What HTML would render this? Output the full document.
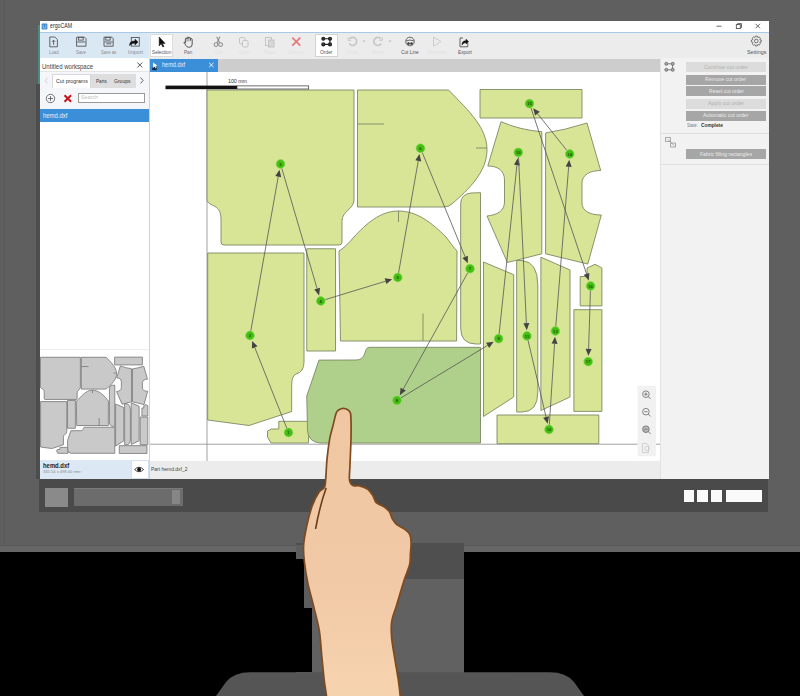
<!DOCTYPE html>
<html><head><meta charset="utf-8">
<style>
*{margin:0;padding:0;box-sizing:border-box}
html,body{width:800px;height:696px;overflow:hidden;background:#000;font-family:"Liberation Sans",sans-serif}
.a{position:absolute}
.t{position:absolute;white-space:nowrap;line-height:1}
svg{position:absolute;left:0;top:0;overflow:visible}
</style></head><body>

<div class="a" style="left:0px;top:0px;width:800px;height:552px;background:#5f5f5f;"></div>
<div class="a" style="left:4px;top:0px;width:0.8px;height:545px;background:#5a5a5a;"></div>
<div class="a" style="left:0px;top:545px;width:800px;height:1px;background:#595959;"></div>
<div class="a" style="left:0px;top:546px;width:800px;height:6px;background:#666666;"></div>
<div class="a" style="left:296px;top:543px;width:168px;height:129.5px;background:#616161;"></div>
<div class="a" style="left:296px;top:543px;width:168px;height:36px;background:#4f4f4f;"></div>
<div class="a" style="left:296px;top:545px;width:9px;height:15px;background:#5d5d5d;"></div>
<div class="a" style="left:296px;top:559.4px;width:8.4px;height:48.6px;background:#000;"></div>
<div class="a" style="left:304.4px;top:560px;width:8px;height:48px;background:#5d5d5d;"></div>
<div class="a" style="left:296px;top:608px;width:16px;height:63.5px;background:#000;"></div>
<svg width="800" height="696"><path d="M250,672.2 L550,672.2 Q566,672.2 574,682 L584,696 L216,696 L226,682 Q234,672.2 250,672.2 Z" fill="#555"/></svg>
<div class="a" style="left:39px;top:479px;width:729px;height:33px;background:#4a4a4a;"></div>
<div class="a" style="left:45px;top:488px;width:22.5px;height:18.5px;background:#8a8a8a;"></div>
<div class="a" style="left:73.5px;top:488px;width:109.5px;height:18px;background:#6c6c6c;border-top:1px solid #7a7a7a"></div>
<div class="a" style="left:172px;top:490px;width:8px;height:14px;background:#868686;"></div>
<div class="a" style="left:683.5px;top:490px;width:10.5px;height:12px;background:#fafafa;"></div>
<div class="a" style="left:697px;top:490px;width:11px;height:12px;background:#fafafa;"></div>
<div class="a" style="left:711px;top:490px;width:11px;height:12px;background:#fafafa;"></div>
<div class="a" style="left:726px;top:490px;width:36px;height:12px;background:#fafafa;"></div>
<div class="a" style="left:40px;top:21px;width:729px;height:458px;background:#ffffff;"></div>
<div class="a" style="left:37.5px;top:25px;width:2.5px;height:59px;background:#4b8b80;"></div>
<div class="a" style="left:36px;top:84px;width:4px;height:395px;background:#4d4d4d;"></div>
<div class="a" style="left:40px;top:21px;width:729px;height:11px;background:#ffffff;"></div>
<svg width="800" height="696"><rect x="41.6" y="23.6" width="5.8" height="5.8" rx="0.8" fill="#3a86cc"/><path d="M43.1,24.6 v2.6 q0,1.2 1.4,1.2 q1.4,0 1.4,-1.2 v-2.6" stroke="#d6e8f8" stroke-width="0.7" fill="none"/></svg>
<div class="t" style="left:50.00px;top:23.24px;font-size:6.8px;color:#2a2a2a;transform:scaleX(0.766);transform-origin:0 0;">ergoCAM</div>
<svg width="800" height="696" stroke="#444" stroke-width="0.8" fill="none"><path d="M716.5,26.2 h5"/><rect x="736.3" y="24.6" width="4" height="4"/><path d="M737.5,24.6 v-1 h4 v4 h-1"/><path d="M755.5,23.8 l4.5,4.5 M760,23.8 l-4.5,4.5"/></svg>
<div class="a" style="left:40px;top:32px;width:729px;height:1px;background:#a9c8e6;"></div>
<div class="a" style="left:40px;top:33px;width:108.6px;height:25.4px;background:#dae8f4;"></div>
<div class="a" style="left:148.6px;top:33px;width:620.4px;height:25.5px;background:#ececec;"></div>
<div class="a" style="left:149.5px;top:33.5px;width:23.5px;height:23.5px;background:#ffffff;border:1px solid #dcdcdc"></div>
<div class="a" style="left:315px;top:33.5px;width:23px;height:23.5px;background:#ffffff;border:1px solid #d2d2d2"></div>
<div class="t" style="left:49.00px;top:49.86px;font-size:5.6px;color:#8a8a8a;transform:scaleX(0.771);transform-origin:0 0;">Load</div>
<div class="t" style="left:76.00px;top:49.86px;font-size:5.6px;color:#8a8a8a;transform:scaleX(0.783);transform-origin:0 0;">Save</div>
<div class="t" style="left:101.20px;top:49.86px;font-size:5.6px;color:#8a8a8a;transform:scaleX(0.746);transform-origin:0 0;">Save as</div>
<div class="t" style="left:128.00px;top:49.86px;font-size:5.6px;color:#8a8a8a;transform:scaleX(0.939);transform-origin:0 0;">Import</div>
<div class="t" style="left:152.00px;top:49.86px;font-size:5.6px;color:#555;transform:scaleX(0.838);transform-origin:0 0;">Selection</div>
<div class="t" style="left:183.80px;top:49.86px;font-size:5.6px;color:#666;transform:scaleX(0.823);transform-origin:0 0;">Pan</div>
<div class="t" style="left:214.50px;top:49.86px;font-size:5.6px;color:#e2e2e2;transform:scaleX(0.861);transform-origin:0 0;">Cut</div>
<div class="t" style="left:238.50px;top:49.86px;font-size:5.6px;color:#e2e2e2;transform:scaleX(0.803);transform-origin:0 0;">Copy</div>
<div class="t" style="left:263.50px;top:49.86px;font-size:5.6px;color:#e2e2e2;transform:scaleX(0.873);transform-origin:0 0;">Paste</div>
<div class="t" style="left:288.00px;top:49.86px;font-size:5.6px;color:#e2e2e2;transform:scaleX(0.988);transform-origin:0 0;">Delete</div>
<div class="t" style="left:320.00px;top:49.86px;font-size:5.6px;color:#555;transform:scaleX(0.873);transform-origin:0 0;">Order</div>
<div class="t" style="left:346.00px;top:49.86px;font-size:5.6px;color:#e2e2e2;transform:scaleX(0.896);transform-origin:0 0;">Undo</div>
<div class="t" style="left:372.00px;top:49.86px;font-size:5.6px;color:#e2e2e2;transform:scaleX(0.896);transform-origin:0 0;">Redo</div>
<div class="t" style="left:401.00px;top:49.86px;font-size:5.6px;color:#555;transform:scaleX(0.853);transform-origin:0 0;">Cut Line</div>
<div class="t" style="left:427.00px;top:49.86px;font-size:5.6px;color:#e2e2e2;transform:scaleX(0.918);transform-origin:0 0;">Simulate</div>
<div class="t" style="left:457.50px;top:49.86px;font-size:5.6px;color:#555;transform:scaleX(0.853);transform-origin:0 0;">Export</div>
<div class="t" style="left:746.50px;top:50.06px;font-size:5.6px;color:#555;transform:scaleX(0.964);transform-origin:0 0;">Settings</div>
<svg width="800" height="696" fill="none" stroke="#555" stroke-width="0.9">
<path d="M49.8,37 h5 l2.6,2.6 v7.2 h-7.6 z"/><path d="M53.6,44.8 v-4.6 M52,41.8 l1.6,-1.6 l1.6,1.6"/>
<path d="M76.6,37.2 h8 l1.4,1.4 v7.6 h-9.4 z"/><rect x="78.6" y="37.3" width="4.6" height="2.8"/><path d="M77.2,42 h8.2"/>
<path d="M104,37.2 h8 l1.2,1.2 v7.8 h-9.2 z"/><rect x="105.8" y="37.3" width="4.4" height="2.8"/><path d="M104.6,42 h8.2 M106.3,43.8 h5"/>
<rect x="131.3" y="37.5" width="8" height="8.6"/>
<path d="M129.6,45.5 q0,-4.6 5.4,-4.4 l0,-1.8 l3,2.8 l-3,2.8 l0,-1.8 q-3.4,0 -5.4,2.4z" fill="#111" stroke="#111" stroke-width="0.6"/>
<path d="M159.2,37 v9 l2,-2.2 l1.6,3.2 l1.2,-0.6 l-1.6,-3 h2.8 z" fill="#111" stroke="#111" stroke-width="0.5"/>
<path d="M184.3,42.6 l1.6,2.9 q1,1.8 3,1.8 h0.5 q2.8,0 2.8,-3.2 v-4.6 q0,-0.8 -0.85,-0.8 q-0.85,0 -0.85,0.8 v-1.2 q0,-0.8 -0.85,-0.8 q-0.85,0 -0.85,0.8 v-0.4 q0,-0.8 -0.85,-0.8 q-0.85,0 -0.85,0.8 v1 q0,-0.8 -0.85,-0.8 q-0.85,0 -0.85,0.8 v3.8 q-1.2,-1 -1.6,0 z" stroke-width="0.9" stroke="#444"/><path d="M187.1,38.7 v3 M188.8,37.6 v3.6 M190.5,38.2 v3" stroke="#444" stroke-width="0.6"/>
</svg>
<svg width="800" height="696" fill="none" stroke="#8f8f8f" stroke-width="1.1">
<circle cx="216" cy="44.6" r="1.9"/><circle cx="220.6" cy="44.6" r="1.9"/><path d="M216.9,42.9 l3,-6.2 M219.7,42.9 l-3,-6.2"/>
</svg>
<svg width="800" height="696" fill="none" stroke="#c0c0c0" stroke-width="0.9">
<rect x="239.5" y="37.5" width="5.5" height="6.5" rx="1.2"/><rect x="242.5" y="40.5" width="5.5" height="6.5" rx="1.2" fill="#ececec"/>
<rect x="265.5" y="37.5" width="6" height="8"/><rect x="268.5" y="40" width="5.5" height="7" fill="#d6d6d6"/>
</svg>
<svg width="800" height="696" fill="none" stroke="#e8797d" stroke-width="1.8">
<path d="M292.3,37.6 l8,8 M300.3,37.6 l-8,8"/>
</svg>
<svg width="800" height="696" fill="#fff" stroke="#222" stroke-width="1.1">
<path d="M323.5,38.8 h6.4 M323.5,44.4 h6.4 M329.9,38.8 v5.6" fill="none"/>
<circle cx="323.3" cy="38.8" r="1.5" fill="#333"/><circle cx="330" cy="38.8" r="1.5" fill="#333"/><circle cx="323.3" cy="44.4" r="1.5" fill="#333"/><circle cx="330" cy="44.4" r="1.5" fill="#333"/>
</svg>
<svg width="800" height="696" fill="none" stroke="#c8c8c8" stroke-width="1.8">
<path d="M349.5,39 a4,4 0 1 1 -0.3,4.4"/><path d="M348.2,37.3 v3 h3" stroke-width="1"/>
<path d="M381,39 a4,4 0 1 0 0.3,4.4"/><path d="M382.3,37.3 v3 h-3" stroke-width="1"/>
</svg>
<svg width="800" height="696" fill="#bdbdbd" stroke="none">
<path d="M362.5,40.6 h3 l-1.5,1.6z M388.5,40.6 h3 l-1.5,1.6z"/>
</svg>
<svg width="800" height="696" fill="none" stroke="#555" stroke-width="0.9">
<circle cx="410" cy="41.5" r="4.3"/><path d="M406,41 q4,-2 8,0 M407,44.2 q3,-1.5 6,0"/><circle cx="408.5" cy="43.6" r="1" fill="#333"/><circle cx="411.5" cy="43.6" r="1" fill="#333"/>
</svg>
<svg width="800" height="696" fill="none" stroke="#c8c8c8" stroke-width="0.9">
<path d="M433.5,37 l7.5,4.6 l-7.5,4.6z"/>
</svg>
<svg width="800" height="696" fill="none" stroke="#555" stroke-width="0.9">
<path d="M460,38 h3 M467.8,42.5 v4.3 h-7.8 v-8.8"/>
<path d="M462,45 q0,-4.4 4,-4.2 v-1.6 l2.6,2.4 l-2.6,2.4 v-1.6 q-2.6,0 -4,2.6z" fill="#111" stroke="#111" stroke-width="0.5"/>
</svg>
<svg width="800" height="696" fill="none" stroke="#555" stroke-width="0.8">
<circle cx="756.3" cy="41" r="1.8"/>
<path d="M760.03,39.87 L761.21,40.06 L761.21,41.94 L760.03,42.13 L759.74,42.84 L760.44,43.80 L759.10,45.14 L758.14,44.44 L757.43,44.73 L757.24,45.91 L755.36,45.91 L755.17,44.73 L754.46,44.44 L753.50,45.14 L752.16,43.80 L752.86,42.84 L752.57,42.13 L751.39,41.94 L751.39,40.06 L752.57,39.87 L752.86,39.16 L752.16,38.20 L753.50,36.86 L754.46,37.56 L755.17,37.27 L755.36,36.09 L757.24,36.09 L757.43,37.27 L758.14,37.56 L759.10,36.86 L760.44,38.20 L759.74,39.16Z"/>
</svg>

<div class="a" style="left:40px;top:58.4px;width:108.6px;height:420.6px;background:#ffffff;"></div>
<div class="a" style="left:40px;top:71.4px;width:108.6px;height:37.6px;background:#f4f6f9;"></div>
<div class="a" style="left:40px;top:71.4px;width:108.6px;height:0.6px;background:#e4e4e4;"></div>
<div class="t" style="left:42.10px;top:62.87px;font-size:7px;color:#444;transform:scaleX(0.864);transform-origin:0 0;">Untitled workspace</div>
<svg width="800" height="696" stroke="#444" stroke-width="0.9"><path d="M137.3,62.5 l5,5 M142.3,62.5 l-5,5"/></svg>
<div class="a" style="left:91.3px;top:74.4px;width:45px;height:13.4px;background:#dedede;"></div>
<div class="a" style="left:52.2px;top:74.4px;width:39.1px;height:14px;background:#ffffff;border:1px solid #d8d8d8;border-bottom:none"></div>
<div class="t" style="left:56.10px;top:77.75px;font-size:6.2px;color:#333;transform:scaleX(0.849);transform-origin:0 0;">Cut programs</div>
<div class="t" style="left:95.80px;top:77.75px;font-size:6.2px;color:#333;transform:scaleX(0.753);transform-origin:0 0;">Parts</div>
<div class="t" style="left:114.30px;top:77.75px;font-size:6.2px;color:#333;transform:scaleX(0.816);transform-origin:0 0;">Groups</div>
<svg width="800" height="696" fill="none" stroke-width="0.8"><path d="M47.5,77.8 l-2.2,2.8 l2.2,2.8" stroke="#c4c4c4"/><path d="M140.5,77.5 l2.6,3 l-2.6,3" stroke="#444"/></svg>
<svg width="800" height="696" fill="none" stroke="#555" stroke-width="0.8"><circle cx="50.5" cy="98.5" r="4.2"/><path d="M48,98.5 h5 M50.5,96 v5"/></svg>
<svg width="800" height="696" fill="none" stroke="#c8171e" stroke-width="2"><path d="M64.5,95.2 l6.6,6.6 M71.1,95.2 l-6.6,6.6"/></svg>
<div class="a" style="left:78.3px;top:93.4px;width:66.5px;height:10px;background:#ffffff;border:1px solid #9a9a9a"></div>
<div class="t" style="left:81.00px;top:95.34px;font-size:5.5px;color:#c0c0c0;transform:scaleX(0.975);transform-origin:0 0;">Search</div>
<div class="a" style="left:40px;top:109px;width:108.6px;height:12.5px;background:#3b8ed8;"></div>
<div class="t" style="left:43.10px;top:112.50px;font-size:6.5px;color:#e8f1fb;transform:scaleX(0.916);transform-origin:0 0;">hemd.dxf</div>
<div class="a" style="left:40px;top:349.3px;width:108.6px;height:0.8px;background:#eeeeee;"></div>
<div class="a" style="left:40px;top:460.2px;width:91px;height:18.8px;background:#dce9f5;"></div>
<div class="a" style="left:131px;top:460.2px;width:17.6px;height:18.8px;background:#ffffff;border:1px solid #cfe1f2"></div>
<div class="t" style="left:43.00px;top:463.34px;font-size:6.8px;color:#222;font-weight:bold;transform:scaleX(0.867);transform-origin:0 0;">hemd.dxf</div>
<div class="t" style="left:43.00px;top:470.65px;font-size:3.6px;color:#8a8a8a;transform:scaleX(1.137);transform-origin:0 0;">335.54 x 498.00 mm&#178;</div>
<svg width="800" height="696"><path d="M134.6,469.5 q4.5,-4.5 9,0 q-4.5,4.5 -9,0z" fill="#fff" stroke="#111" stroke-width="0.8"/><circle cx="139.1" cy="469.5" r="1.9" fill="#111"/></svg>
<div class="a" style="left:148.6px;top:58.4px;width:1px;height:420.6px;background:#bcd6ee;"></div>
<div class="a" style="left:149.6px;top:58.5px;width:510.6px;height:13.5px;background:#cdcdcd;"></div>
<div class="a" style="left:149.6px;top:58.5px;width:68.4px;height:13.5px;background:#3b8ed8;"></div>
<svg width="800" height="696"><path d="M152,70 q0,-3 2.5,-4 l2.5,1 q1,2 -1,3.2z" fill="#15233a"/><path d="M153,62.5 l4.5,3.2 l-2,0.3 l1.2,2 l-0.9,0.5 l-1.2,-2 l-1.4,1.4z" fill="#fff"/></svg>
<div class="t" style="left:162.00px;top:62.00px;font-size:6.5px;color:#e6f0fa;transform:scaleX(0.860);transform-origin:0 0;">hemd.dxf</div>
<svg width="800" height="696" stroke="#fff" stroke-width="0.9"><path d="M209.2,62.8 l4.3,4.3 M213.5,62.8 l-4.3,4.3"/></svg>
<div class="a" style="left:149.6px;top:72px;width:510.6px;height:389.2px;background:#ffffff;"></div>
<div class="a" style="left:149.6px;top:461.2px;width:510.6px;height:17.8px;background:#ececec;"></div>
<div class="t" style="left:151.00px;top:466.56px;font-size:5.6px;color:#444;transform:scaleX(0.888);transform-origin:0 0;">Part hemd.dxf_2</div>
<div class="a" style="left:660.2px;top:58px;width:108.8px;height:421px;background:#f2f2f2;border-left:1px solid #e2e2e2"></div>
<svg width="800" height="696" fill="none" stroke="#666" stroke-width="0.8">
<path d="M666.5,63.8 h6 M666.5,69.8 h6 M672.5,63.8 v6"/>
<circle cx="666.3" cy="63.8" r="1.5" fill="#aaa"/><circle cx="672.7" cy="63.8" r="1.5" fill="#aaa"/><circle cx="666.3" cy="69.8" r="1.5" fill="#aaa"/><circle cx="672.7" cy="69.8" r="1.5" fill="#aaa"/>
</svg>
<div class="a" style="left:686.2px;top:62px;width:79.8px;height:10.400000000000006px;background:#dcdcdc;"></div>
<div class="t" style="left:704.20px;top:64.66px;font-size:5.6px;color:#b0b0b0;transform:scaleX(0.951);transform-origin:0 0;">Continue cut order</div>
<div class="a" style="left:686.2px;top:74.6px;width:79.8px;height:10.200000000000003px;background:#a6a6a6;"></div>
<div class="t" style="left:705.30px;top:77.26px;font-size:5.6px;color:#e8e8e8;transform:scaleX(0.923);transform-origin:0 0;">Remove cut order</div>
<div class="a" style="left:686.2px;top:86.1px;width:79.8px;height:10.100000000000009px;background:#a6a6a6;"></div>
<div class="t" style="left:708.70px;top:89.06px;font-size:5.6px;color:#ececec;transform:scaleX(0.912);transform-origin:0 0;">Reset cut order</div>
<div class="a" style="left:686.2px;top:98.7px;width:79.8px;height:10.099999999999994px;background:#dcdcdc;"></div>
<div class="t" style="left:708.00px;top:101.26px;font-size:5.6px;color:#b0b0b0;transform:scaleX(0.956);transform-origin:0 0;">Apply cut order</div>
<div class="a" style="left:686.2px;top:111.1px;width:79.8px;height:9.700000000000003px;background:#a6a6a6;"></div>
<div class="t" style="left:703.00px;top:113.46px;font-size:5.6px;color:#ececec;transform:scaleX(0.939);transform-origin:0 0;">Automatic cut order</div>
<div class="a" style="left:686.2px;top:148.6px;width:79.8px;height:10.400000000000006px;background:#a6a6a6;"></div>
<div class="t" style="left:700.00px;top:151.56px;font-size:5.6px;color:#ececec;transform:scaleX(0.908);transform-origin:0 0;">Fabric filling rectangles</div>
<div class="t" style="left:686.70px;top:123.03px;font-size:5.4px;color:#777;transform:scaleX(0.758);transform-origin:0 0;">State:</div>
<div class="t" style="left:701.40px;top:122.86px;font-size:5.6px;color:#333;font-weight:bold;transform:scaleX(0.858);transform-origin:0 0;">Complete</div>
<div class="a" style="left:661px;top:133.3px;width:108px;height:0.8px;background:#e0e0e0;"></div>
<div class="a" style="left:661px;top:163.5px;width:108px;height:0.8px;background:#e0e0e0;"></div>
<svg width="800" height="696" fill="none" stroke="#888" stroke-width="0.7">
<path d="M665.5,137.5 h5 v4 h-5z M668,139.5 l6,6 M670.5,143 h5 v4 h-5z"/>
</svg>
<svg width="800" height="696">
<path d="M207,72 V461 M150,444.2 H660" stroke="#8a8a8a" stroke-width="0.8" fill="none"/>
<g fill="#d8e596" stroke="#7d8963" stroke-width="0.9" stroke-linejoin="round">
<path d="M207,90 L354,90 L354,200 C354,209 342,211 342,221 L342,242 Q342,245 339,245 L224,245 Q221,245 221,242 L221,220 C221,212 219,209 215,206.5 C212,204.5 207,204 207,199 Z"/>
<path d="M357.5,90 L448.5,90 C470,112 487,128 487,150 C487,172 468,190 453,203 Q449,207 444,207 L357.5,207 Z"/>
<path d="M480,89.5 L582,89.5 L582,118 L480,118 Z"/>
<path d="M501,121.7 Q520,130 541.8,131.7 L541.8,253.8 L507.4,262.5 L487,216 C497,215 504.5,211 504.5,202 L504.5,180 C504.5,170 497,166 487.8,166 Z"/>
<path d="M545.6,133 Q565,130 587,123 L600.7,170.5 C590,170.5 582,175 582,183 L582,203 C582,211 590,215 601.3,215 L587.8,264 L545.6,253.8 Z"/>
<path d="M471,193 L480.5,192.7 L480.5,344 L476,344 Q460.7,344 460.7,328 L460.7,204 Q460.7,194 471,193 Z"/>
<path d="M340.5,341 L339,251 C344,248 349,243 354,237 C366,224 380,211 398.5,211 C417,211 432,223 446,237 C450,242 453,247 457,251 L456.6,341 Z"/>
<path d="M207.7,253 L304,253 L304,362 Q304,372 296,374 Q291.7,376 291.7,385 L291.7,411.5 L249,425.5 L207.7,420 Z"/>
<path d="M306.75,248.75 L335.5,248.75 L335.5,351 L306.75,351 Z"/>
<path d="M278.8,421.3 L308.5,421.3 L308.5,443 L271,443 L267.5,437 L267.5,431 L271.5,429 L278.8,429 Z"/>
<path d="M483.5,262 L513.7,274.7 L513.7,397 L483.5,416.5 Z"/>
<path d="M516.7,260.5 L522,260.5 Q537.8,262 537.8,285 L537.8,392 Q537.8,412 522,412 L516.7,412 Z"/>
<path d="M540.9,257.2 L570,270 L570,397 L540.9,410.5 Z"/>
<path d="M580.2,276.5 L587,276.5 L587,268 L595,264.3 L601.9,268 L601.9,305.9 L580.2,305.9 Z"/>
<path d="M573.9,309.7 L601.9,309.7 L601.9,411.4 L573.9,411.4 Z"/>
<path d="M497,415 L598.8,415 L598.8,443.7 L497,443.7 Z"/>
<path d="M370,347.3 L480.5,347.3 L480.5,443 L320,443 Q308,442 307.5,430 L306.75,396 L319,360.1 L356,360 C362,360 364,356 365,352.5 C366,349 367,347.3 370,347.3 Z" fill="#afd08a"/>
</g>
<path d="M357.5,124 H384 M476,148 H487 M398.5,211 V222 M423,313.5 V341" stroke="#7d8963" stroke-width="0.9" fill="none"/>
<rect x="165.5" y="85.6" width="71.5" height="3.6" fill="#111"/><rect x="237" y="85.9" width="71.7" height="3.1" fill="#fff" stroke="#333" stroke-width="0.7"/>
<path d="M286.80,428.22 L254.72,347.40" stroke="#555" stroke-width="0.8" fill="none"/>
<path d="M252.14,340.89 L257.51,346.29 L251.93,348.50 Z" fill="#444"/>
<path d="M250.81,330.97 L278.26,176.60" stroke="#555" stroke-width="0.8" fill="none"/>
<path d="M279.48,169.71 L281.21,177.13 L275.31,176.08 Z" fill="#444"/>
<path d="M281.80,168.41 L317.14,288.72" stroke="#555" stroke-width="0.8" fill="none"/>
<path d="M319.12,295.44 L314.26,289.56 L320.02,287.87 Z" fill="#444"/>
<path d="M325.15,299.66 L385.51,281.24" stroke="#555" stroke-width="0.8" fill="none"/>
<path d="M392.20,279.19 L386.38,284.11 L384.63,278.37 Z" fill="#444"/>
<path d="M398.55,272.97 L418.28,160.86" stroke="#555" stroke-width="0.8" fill="none"/>
<path d="M419.49,153.96 L421.24,161.38 L415.33,160.34 Z" fill="#444"/>
<path d="M422.25,152.50 L465.13,256.86" stroke="#555" stroke-width="0.8" fill="none"/>
<path d="M467.80,263.34 L462.36,258.00 L467.91,255.72 Z" fill="#444"/>
<path d="M467.77,272.72 L403.21,389.11" stroke="#555" stroke-width="0.8" fill="none"/>
<path d="M399.81,395.23 L400.59,387.65 L405.83,390.56 Z" fill="#444"/>
<path d="M400.93,397.92 L487.65,345.34" stroke="#555" stroke-width="0.8" fill="none"/>
<path d="M493.64,341.71 L489.21,347.90 L486.10,342.77 Z" fill="#444"/>
<path d="M499.08,334.13 L516.95,165.13" stroke="#555" stroke-width="0.8" fill="none"/>
<path d="M517.69,158.17 L519.94,165.44 L513.97,164.81 Z" fill="#444"/>
<path d="M518.52,156.99 L526.39,323.21" stroke="#555" stroke-width="0.8" fill="none"/>
<path d="M526.73,330.21 L523.40,323.36 L529.39,323.07 Z" fill="#444"/>
<path d="M528.05,340.48 L546.07,417.04" stroke="#555" stroke-width="0.8" fill="none"/>
<path d="M547.67,423.85 L543.15,417.73 L548.99,416.35 Z" fill="#444"/>
<path d="M549.30,424.91 L554.57,343.77" stroke="#555" stroke-width="0.8" fill="none"/>
<path d="M555.02,336.79 L557.56,343.97 L551.58,343.58 Z" fill="#444"/>
<path d="M555.77,326.41 L568.67,166.76" stroke="#555" stroke-width="0.8" fill="none"/>
<path d="M569.23,159.78 L571.66,167.00 L565.68,166.52 Z" fill="#444"/>
<path d="M566.83,150.40 L537.48,113.61" stroke="#555" stroke-width="0.8" fill="none"/>
<path d="M533.12,108.13 L539.83,111.74 L535.14,115.48 Z" fill="#444"/>
<path d="M530.96,107.96 L586.53,273.86" stroke="#555" stroke-width="0.8" fill="none"/>
<path d="M588.76,280.50 L583.69,274.82 L589.38,272.91 Z" fill="#444"/>
<path d="M590.45,290.60 L588.61,348.81" stroke="#555" stroke-width="0.8" fill="none"/>
<path d="M588.38,355.80 L585.61,348.71 L591.60,348.90 Z" fill="#444"/>
<circle cx="288.5" cy="432.5" r="4.4" fill="#45bf12" stroke="#86dc58" stroke-width="0.6"/>
<circle cx="250" cy="335.5" r="4.4" fill="#45bf12" stroke="#86dc58" stroke-width="0.6"/>
<circle cx="280.5" cy="164" r="4.4" fill="#45bf12" stroke="#86dc58" stroke-width="0.6"/>
<circle cx="320.75" cy="301" r="4.4" fill="#45bf12" stroke="#86dc58" stroke-width="0.6"/>
<circle cx="397.75" cy="277.5" r="4.4" fill="#45bf12" stroke="#86dc58" stroke-width="0.6"/>
<circle cx="420.5" cy="148.25" r="4.4" fill="#45bf12" stroke="#86dc58" stroke-width="0.6"/>
<circle cx="470" cy="268.7" r="4.4" fill="#45bf12" stroke="#86dc58" stroke-width="0.6"/>
<circle cx="397" cy="400.3" r="4.4" fill="#45bf12" stroke="#86dc58" stroke-width="0.6"/>
<circle cx="498.6" cy="338.7" r="4.4" fill="#45bf12" stroke="#86dc58" stroke-width="0.6"/>
<circle cx="518.3" cy="152.4" r="4.4" fill="#45bf12" stroke="#86dc58" stroke-width="0.6"/>
<circle cx="527" cy="336" r="4.4" fill="#45bf12" stroke="#86dc58" stroke-width="0.6"/>
<circle cx="549" cy="429.5" r="4.4" fill="#45bf12" stroke="#86dc58" stroke-width="0.6"/>
<circle cx="555.4" cy="331" r="4.4" fill="#45bf12" stroke="#86dc58" stroke-width="0.6"/>
<circle cx="569.7" cy="154" r="4.4" fill="#45bf12" stroke="#86dc58" stroke-width="0.6"/>
<circle cx="529.5" cy="103.6" r="4.4" fill="#45bf12" stroke="#86dc58" stroke-width="0.6"/>
<circle cx="590.6" cy="286" r="4.4" fill="#45bf12" stroke="#86dc58" stroke-width="0.6"/>
<circle cx="588.2" cy="361.6" r="4.4" fill="#45bf12" stroke="#86dc58" stroke-width="0.6"/>
<text x="288.5" y="434.0" font-size="4.2" text-anchor="middle" fill="#1f4d08" font-weight="bold" font-family="Liberation Sans">1</text>
<text x="250" y="337.0" font-size="4.2" text-anchor="middle" fill="#1f4d08" font-weight="bold" font-family="Liberation Sans">2</text>
<text x="280.5" y="165.5" font-size="4.2" text-anchor="middle" fill="#1f4d08" font-weight="bold" font-family="Liberation Sans">3</text>
<text x="320.75" y="302.5" font-size="4.2" text-anchor="middle" fill="#1f4d08" font-weight="bold" font-family="Liberation Sans">4</text>
<text x="397.75" y="279.0" font-size="4.2" text-anchor="middle" fill="#1f4d08" font-weight="bold" font-family="Liberation Sans">5</text>
<text x="420.5" y="149.75" font-size="4.2" text-anchor="middle" fill="#1f4d08" font-weight="bold" font-family="Liberation Sans">6</text>
<text x="470" y="270.2" font-size="4.2" text-anchor="middle" fill="#1f4d08" font-weight="bold" font-family="Liberation Sans">7</text>
<text x="397" y="401.8" font-size="4.2" text-anchor="middle" fill="#1f4d08" font-weight="bold" font-family="Liberation Sans">8</text>
<text x="498.6" y="340.2" font-size="4.2" text-anchor="middle" fill="#1f4d08" font-weight="bold" font-family="Liberation Sans">9</text>
<text x="518.3" y="153.9" font-size="4.2" text-anchor="middle" fill="#1f4d08" font-weight="bold" font-family="Liberation Sans">10</text>
<text x="527" y="337.5" font-size="4.2" text-anchor="middle" fill="#1f4d08" font-weight="bold" font-family="Liberation Sans">11</text>
<text x="549" y="431.0" font-size="4.2" text-anchor="middle" fill="#1f4d08" font-weight="bold" font-family="Liberation Sans">12</text>
<text x="555.4" y="332.5" font-size="4.2" text-anchor="middle" fill="#1f4d08" font-weight="bold" font-family="Liberation Sans">13</text>
<text x="569.7" y="155.5" font-size="4.2" text-anchor="middle" fill="#1f4d08" font-weight="bold" font-family="Liberation Sans">14</text>
<text x="529.5" y="105.1" font-size="4.2" text-anchor="middle" fill="#1f4d08" font-weight="bold" font-family="Liberation Sans">15</text>
<text x="590.6" y="287.5" font-size="4.2" text-anchor="middle" fill="#1f4d08" font-weight="bold" font-family="Liberation Sans">16</text>
<text x="588.2" y="363.1" font-size="4.2" text-anchor="middle" fill="#1f4d08" font-weight="bold" font-family="Liberation Sans">17</text>
<text x="237.5" y="82.6" font-size="5.6" text-anchor="middle" fill="#333" font-family="Liberation Sans" textLength="19" lengthAdjust="spacingAndGlyphs">100 mm</text>
<rect x="637.5" y="385.8" width="18.5" height="70.5" fill="#f1f1f1"/>
<g fill="none" stroke="#666" stroke-width="0.8"><circle cx="645.9" cy="394.2" r="3.3"/><path d="M648.3,396.6 l2.4,2.4 M644.2,394.2 h3.4 M645.9,392.5 v3.4"/><circle cx="645.9" cy="411.7" r="3.3"/><path d="M648.3,414.1 l2.4,2.4 M644.2,411.7 h3.4"/><circle cx="645.9" cy="429.2" r="3.3" fill="#bbb"/><path d="M648.3,431.6 l2.4,2.4 M644.5,430.5 l1.5,-2 l1.5,1.5"/></g><g fill="none" stroke="#c8c8c8" stroke-width="0.8"><path d="M642.5,443.5 h4 l2,2 v7 h-6z"/><circle cx="647" cy="448.5" r="2.2"/></g>
<g transform="translate(-15.904,332.792) scale(0.272)" fill="#c9c9c9" stroke="#7d7d7d" stroke-width="3.2" stroke-linejoin="round">
<path d="M207,90 L354,90 L354,200 C354,209 342,211 342,221 L342,242 Q342,245 339,245 L224,245 Q221,245 221,242 L221,220 C221,212 219,209 215,206.5 C212,204.5 207,204 207,199 Z"/>
<path d="M357.5,90 L448.5,90 C470,112 487,128 487,150 C487,172 468,190 453,203 Q449,207 444,207 L357.5,207 Z"/>
<path d="M480,89.5 L582,89.5 L582,118 L480,118 Z"/>
<path d="M501,121.7 Q520,130 541.8,131.7 L541.8,253.8 L507.4,262.5 L487,216 C497,215 504.5,211 504.5,202 L504.5,180 C504.5,170 497,166 487.8,166 Z"/>
<path d="M545.6,133 Q565,130 587,123 L600.7,170.5 C590,170.5 582,175 582,183 L582,203 C582,211 590,215 601.3,215 L587.8,264 L545.6,253.8 Z"/>
<path d="M471,193 L480.5,192.7 L480.5,344 L476,344 Q460.7,344 460.7,328 L460.7,204 Q460.7,194 471,193 Z"/>
<path d="M340.5,341 L339,251 C344,248 349,243 354,237 C366,224 380,211 398.5,211 C417,211 432,223 446,237 C450,242 453,247 457,251 L456.6,341 Z"/>
<path d="M207.7,253 L304,253 L304,362 Q304,372 296,374 Q291.7,376 291.7,385 L291.7,411.5 L249,425.5 L207.7,420 Z"/>
<path d="M306.75,248.75 L335.5,248.75 L335.5,351 L306.75,351 Z"/>
<path d="M278.8,421.3 L308.5,421.3 L308.5,443 L271,443 L267.5,437 L267.5,431 L271.5,429 L278.8,429 Z"/>
<path d="M483.5,262 L513.7,274.7 L513.7,397 L483.5,416.5 Z"/>
<path d="M516.7,260.5 L522,260.5 Q537.8,262 537.8,285 L537.8,392 Q537.8,412 522,412 L516.7,412 Z"/>
<path d="M540.9,257.2 L570,270 L570,397 L540.9,410.5 Z"/>
<path d="M580.2,276.5 L587,276.5 L587,268 L595,264.3 L601.9,268 L601.9,305.9 L580.2,305.9 Z"/>
<path d="M573.9,309.7 L601.9,309.7 L601.9,411.4 L573.9,411.4 Z"/>
<path d="M497,415 L598.8,415 L598.8,443.7 L497,443.7 Z"/>
<path d="M370,347.3 L480.5,347.3 L480.5,443 L320,443 Q308,442 307.5,430 L306.75,396 L319,360.1 L356,360 C362,360 364,356 365,352.5 C366,349 367,347.3 370,347.3 Z"/>
<path d="M357.5,124 H384 M476,148 H487 M398.5,211 V222 M423,313.5 V341" fill="none"/>
</g>
</svg>
<svg width="800" height="696">
<defs><linearGradient id="skin" x1="0" y1="0" x2="0" y2="1"><stop offset="0" stop-color="#f0c7a2"/><stop offset="0.55" stop-color="#f1c9a6"/><stop offset="1" stop-color="#f8d6b2"/></linearGradient></defs>
<path d="M343.30,408.40 C344.77,408.40 346.62,409.03 347.80,409.80 C348.98,410.57 349.87,411.30 350.40,413.00 C350.93,414.70 350.90,415.70 351.00,420.00 C351.10,424.30 351.17,431.35 351.00,438.80 C350.83,446.25 350.25,457.80 350.00,464.70 C349.75,471.60 349.02,476.72 349.50,480.20 C349.98,483.68 351.25,484.67 352.90,485.60 C354.55,486.53 356.92,485.20 359.40,485.80 C361.88,486.40 365.55,487.53 367.80,489.20 C370.05,490.87 371.50,493.57 372.90,495.80 C374.30,498.03 374.58,500.90 376.20,502.60 C377.82,504.30 380.45,504.55 382.60,506.00 C384.75,507.45 387.48,509.17 389.10,511.30 C390.72,513.43 391.02,516.58 392.30,518.80 C393.58,521.02 394.75,522.87 396.80,524.60 C398.85,526.33 402.43,527.53 404.60,529.20 C406.77,530.87 408.72,532.40 409.80,534.60 C410.88,536.80 411.00,539.17 411.10,542.40 C411.20,545.63 410.65,550.27 410.40,554.00 C410.15,557.73 410.63,560.47 409.60,564.80 C408.57,569.13 406.35,573.30 404.20,580.00 C402.05,586.70 398.78,598.05 396.70,605.00 C394.62,611.95 392.53,616.15 391.70,621.70 C390.87,627.25 391.15,631.92 391.70,638.30 C392.25,644.68 393.90,653.05 395.00,660.00 C396.10,666.95 397.38,673.33 398.30,680.00 C399.22,686.67 399.97,692.50 400.50,700.00 C401.03,707.50 413.58,720.83 401.50,725.00 C389.42,729.17 340.43,729.17 328.00,725.00 C315.57,720.83 327.53,707.50 326.90,700.00 C326.27,692.50 325.07,687.50 324.20,680.00 C323.33,672.50 322.53,663.33 321.70,655.00 C320.87,646.67 320.60,638.33 319.20,630.00 C317.80,621.67 315.18,612.77 313.30,605.00 C311.42,597.23 309.37,590.43 307.90,583.40 C306.43,576.37 305.22,569.12 304.50,562.80 C303.78,556.48 303.18,551.83 303.60,545.50 C304.02,539.17 305.57,531.40 307.00,524.80 C308.43,518.20 310.18,511.37 312.20,505.90 C314.22,500.43 317.05,495.07 319.10,492.00 C321.15,488.93 323.38,489.90 324.50,487.50 C325.62,485.10 325.37,482.48 325.80,477.60 C326.23,472.72 326.45,464.67 327.10,458.20 C327.75,451.73 328.73,444.18 329.70,438.80 C330.67,433.42 331.82,430.20 332.90,425.90 C333.98,421.60 335.18,415.68 336.20,413.00 C337.22,410.32 337.82,410.57 339.00,409.80 C340.18,409.03 341.83,408.40 343.30,408.40 Z" fill="url(#skin)" stroke="#7e4a1f" stroke-width="1.7" stroke-linejoin="round"/>
<path d="M326,488.6 Q320,505 315.7,528.3" stroke="#6a3c18" stroke-width="1.6" fill="none" stroke-linecap="round"/>
</svg>
</body></html>
